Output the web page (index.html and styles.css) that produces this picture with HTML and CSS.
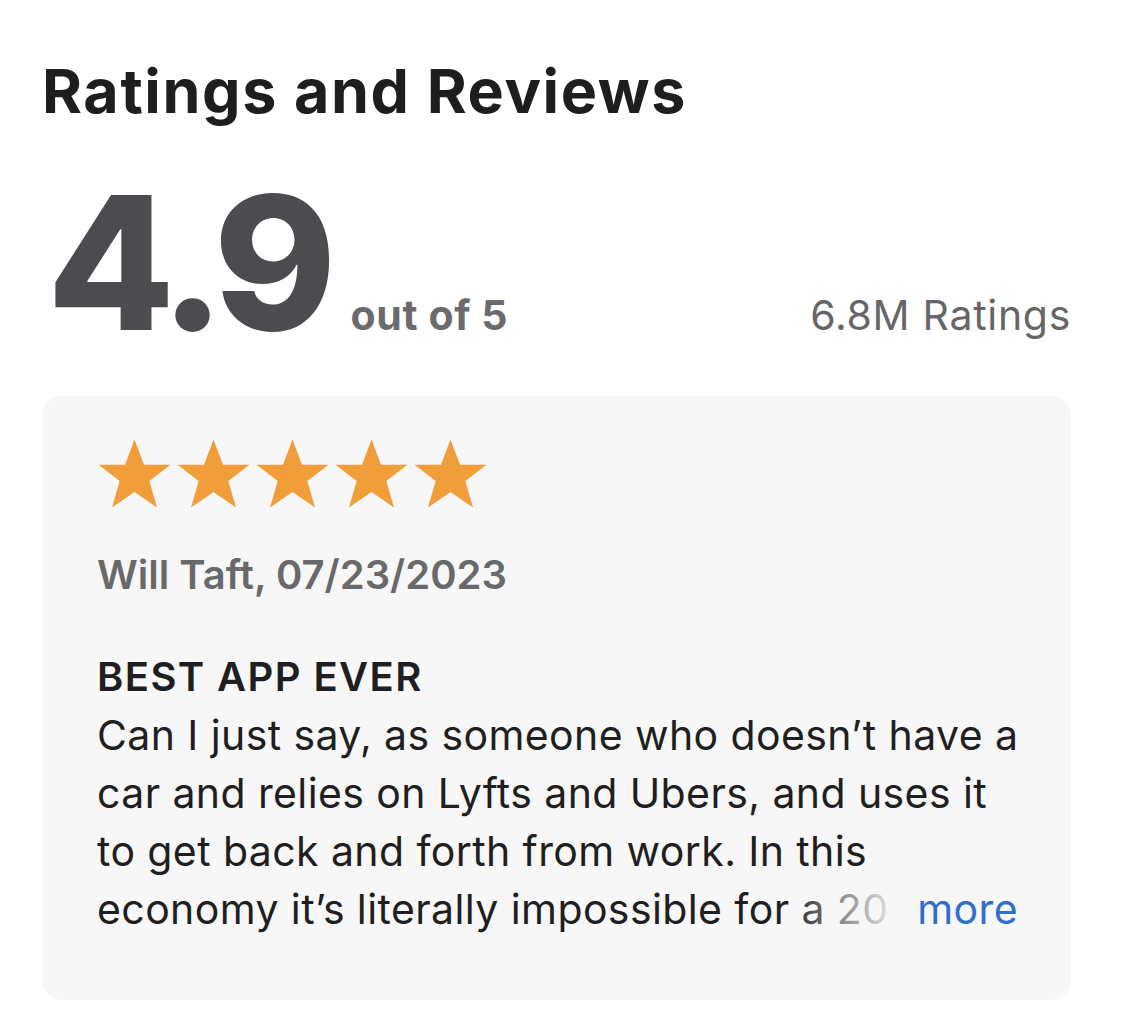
FILE: index.html
```html
<!DOCTYPE html>
<html>
<head>
<meta charset="utf-8">
<link rel="stylesheet" href="styles.css">
</head>
<body>
<main class="page">
  <h1 class="title">Ratings and Reviews</h1>
  <div class="summary">
    <div class="score-group">
      <span class="score">4.9</span>
      <span class="out-of">out of 5</span>
    </div>
    <span class="count">6.8M Ratings</span>
  </div>
  <section class="card">
    <div class="stars">
      <svg class="star" viewBox="0 0 24 24"><path d="M12 0.6l3.05 8.1 8.45.05-6.75 5.2 2.45 8.45L12 17.4l-7.2 5 2.45-8.45L.5 8.75l8.45-.05z"/></svg>
      <svg class="star" viewBox="0 0 24 24"><path d="M12 0.6l3.05 8.1 8.45.05-6.75 5.2 2.45 8.45L12 17.4l-7.2 5 2.45-8.45L.5 8.75l8.45-.05z"/></svg>
      <svg class="star" viewBox="0 0 24 24"><path d="M12 0.6l3.05 8.1 8.45.05-6.75 5.2 2.45 8.45L12 17.4l-7.2 5 2.45-8.45L.5 8.75l8.45-.05z"/></svg>
      <svg class="star" viewBox="0 0 24 24"><path d="M12 0.6l3.05 8.1 8.45.05-6.75 5.2 2.45 8.45L12 17.4l-7.2 5 2.45-8.45L.5 8.75l8.45-.05z"/></svg>
      <svg class="star" viewBox="0 0 24 24"><path d="M12 0.6l3.05 8.1 8.45.05-6.75 5.2 2.45 8.45L12 17.4l-7.2 5 2.45-8.45L.5 8.75l8.45-.05z"/></svg>
    </div>
    <p class="author">Will Taft, 07/23/2023</p>
    <h2 class="review-title">BEST APP EVER</h2>
    <p class="review-text"><span class="more">more</span>Can I just say, as someone who doesn’t have a car and relies on Lyfts and Ubers, and uses it to get back and forth from work. In this economy it’s literally impossible for a 20 year old to afford a car, insurance and gas every month.</p>
  </section>
</main>
</body>
</html>
```
FILE: styles.css
```css
html, body {
  margin: 0;
  padding: 0;
  background: #ffffff;
}

body {
  font-family: Inter, "Noto Sans", "Liberation Sans", sans-serif;
  color: #1f1f21;
}

.page {
  width: 1029px;
  margin-left: 42px;
  padding-top: 55px;
}

.title {
  margin: 0;
  font-size: 61px;
  line-height: 72px;
  font-weight: 700;
  letter-spacing: 1.6px;
  color: #1e1e20;
}

.summary {
  display: flex;
  align-items: baseline;
  justify-content: space-between;
  margin-top: 41px;
  height: 190px;
}

.score-group {
  display: flex;
  align-items: baseline;
  gap: 23px;
}

.score {
  font-size: 186px;
  line-height: 190px;
  font-weight: 800;
  letter-spacing: -9px;
  color: #4b4b50;
  margin-left: 5px;
}

.out-of {
  font-size: 41px;
  font-weight: 700;
  letter-spacing: 0.6px;
  color: #6b6b6e;
}

.count {
  font-size: 41px;
  font-weight: 400;
  letter-spacing: 0.7px;
  color: #666668;
}

.card {
  margin-top: 38px;
  background: #f7f7f7;
  border-radius: 20px;
  padding: 41px 45px 62px 55px;
}

.stars {
  display: flex;
  gap: 4px;
}

.star {
  width: 75px;
  height: 76px;
  fill: #f09d3a;
}

.author {
  margin: 33px 0 0;
  font-size: 40px;
  line-height: 58px;
  font-weight: 600;
  color: #69696b;
}

.review-title {
  margin: 44px 0 0;
  font-size: 40px;
  line-height: 58px;
  font-weight: 600;
  letter-spacing: 1.4px;
  color: #1f1f21;
}

.review-text {
  margin: 0;
  font-size: 41px;
  line-height: 58px;
  font-weight: 400;
  letter-spacing: 0.4px;
  color: #1f1f21;
  max-height: 232px;
  overflow: hidden;
}

.review-text::before {
  content: "";
  float: right;
  width: 0;
  height: 174px;
}

.more {
  position: relative;
  float: right;
  clear: right;
  margin-right: 8px;
  margin-left: -130px;
  padding-left: 130px;
  color: #2f6fcb;
  background: linear-gradient(to right, rgba(247,247,247,0) 0, rgba(247,247,247,0.55) 60px, #f7f7f7 118px);
}
```
